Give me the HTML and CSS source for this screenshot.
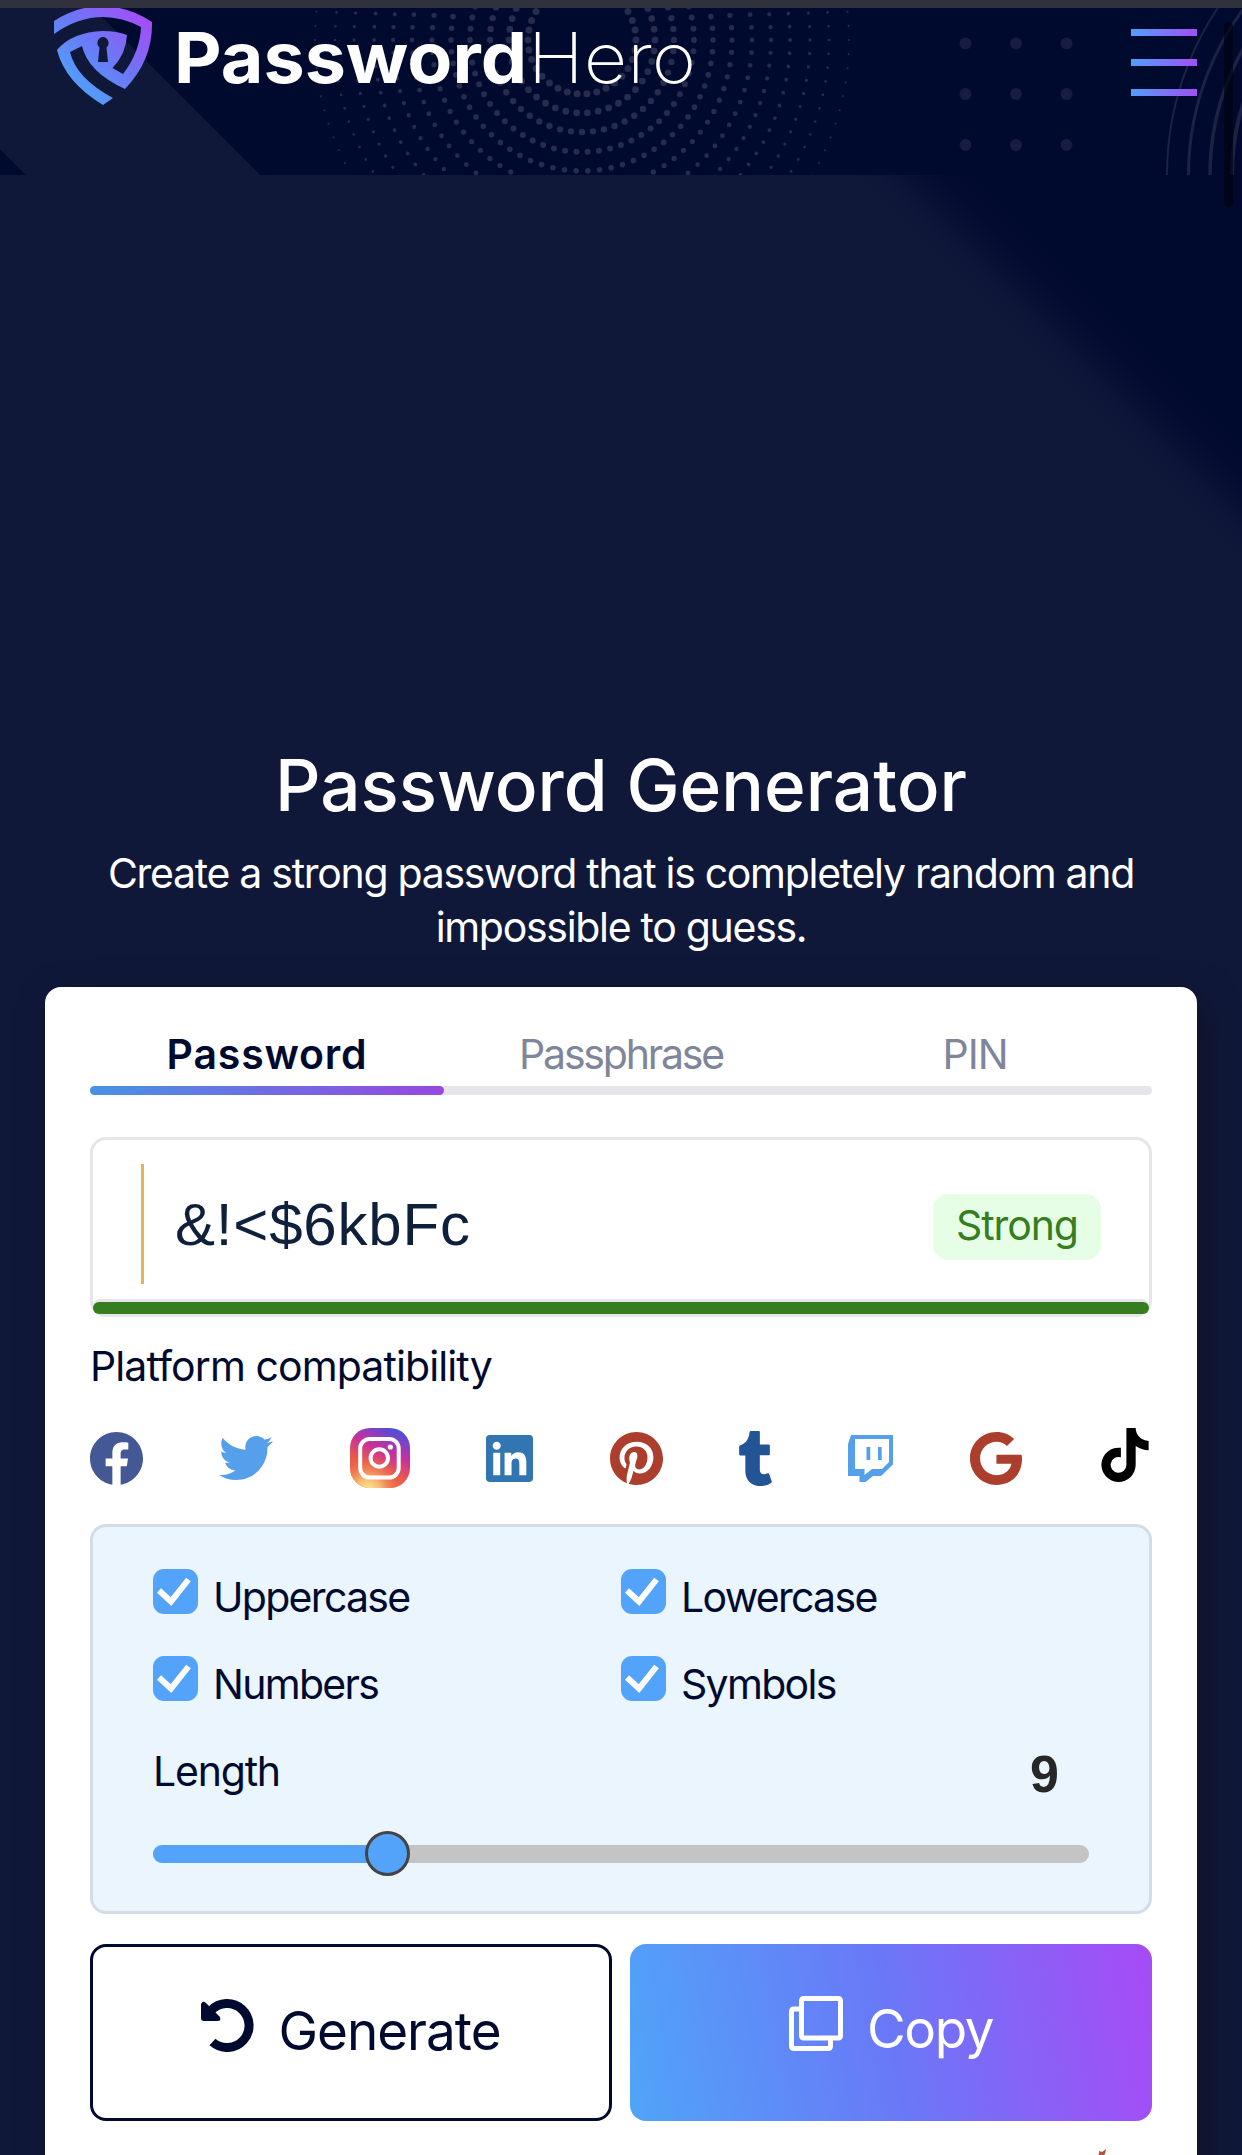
FILE: index.html
```html
<!DOCTYPE html>
<html lang="en">
<head>
<meta charset="utf-8">
<title>PasswordHero</title>
<link rel="stylesheet" href="styles.css">
</head>
<body>
<div class="status-strip"></div>
<header class="header">
  <svg class="header-art" width="1242" height="167" viewBox="0 8 1242 167">
    <path fill="#10183a" d="M0 8H93L260 175H26L0 149z"/>
    <g class="rings">
      <circle cx="582" cy="40" r="54" stroke-width="7" pathLength="34"/>
      <circle cx="582" cy="40" r="73" stroke-width="6.8" pathLength="42"/>
      <circle cx="582" cy="40" r="92" stroke-width="6.4" pathLength="52"/>
      <circle cx="582" cy="40" r="112" stroke-width="6" pathLength="62"/>
      <circle cx="582" cy="40" r="131" stroke-width="5.6" pathLength="70"/>
      <circle cx="582" cy="40" r="150" stroke-width="5.2" pathLength="76"/>
      <circle cx="582" cy="40" r="170" stroke-width="4.8" pathLength="84"/>
      <circle cx="582" cy="40" r="189" stroke-width="4.3" pathLength="92"/>
      <circle cx="582" cy="40" r="208" stroke-width="3.8" pathLength="98"/>
      <circle cx="582" cy="40" r="228" stroke-width="3.3" pathLength="106"/>
      <circle cx="582" cy="40" r="247" stroke-width="2.7" pathLength="112"/>
      <circle cx="582" cy="40" r="267" stroke-width="2.1" pathLength="118"/>
    </g>
    <g fill="#171c40">
      <circle cx="965.5" cy="43.5" r="6"/><circle cx="1016" cy="43.5" r="6"/><circle cx="1066.5" cy="43.5" r="6"/>
      <circle cx="965.5" cy="94" r="6"/><circle cx="1016" cy="94" r="6"/><circle cx="1066.5" cy="94" r="6"/>
      <circle cx="965.5" cy="145" r="6"/><circle cx="1016" cy="145" r="6"/><circle cx="1066.5" cy="145" r="6"/>
    </g>
    <g fill="none" stroke="#1b2344">
      <circle cx="1467" cy="175" r="300" stroke-width="2"/>
      <circle cx="1467" cy="175" r="278.5" stroke-width="3"/>
      <circle cx="1467" cy="175" r="257" stroke-width="3.5"/>
      <circle cx="1467" cy="175" r="235" stroke-width="4"/>
    </g>
  </svg>
  <svg class="logo" width="646" height="107" viewBox="54 8 646 107">
    <defs>
      <linearGradient id="shield" gradientUnits="userSpaceOnUse" x1="75" y1="95" x2="148" y2="20">
        <stop offset="0" stop-color="#4fa3f8"/><stop offset=".5" stop-color="#6c77f7"/><stop offset="1" stop-color="#a44df6"/>
      </linearGradient>
    </defs>
    <path fill="url(#shield)" d="M54 34V21Q77 6 103 6Q130 7 152 22Q153 60 125 89Q88 72 82 46L70 52Q76 78 113 98L103 105Q65 82 57 50Q72 32 103 31Q117 31 127 35Q126 54 112.500 68L123 74Q140 52 141 27Q122 17 103 17Q78 17 54 34z"/>
    <path fill="#10183a" d="M103 37a6 6 0 0 1 3.500 10.500L108 62H98L99.500 47.500A6 6 0 0 1 103 37z"/>
    <text class="logo-bold" x="174" y="83" textLength="353" lengthAdjust="spacingAndGlyphs">Password</text>
    <text class="logo-thin" x="528" y="83" textLength="168" lengthAdjust="spacingAndGlyphs">Hero</text>
  </svg>
  <div class="menu"><i></i><i></i><i></i></div>
</header>
<div class="scroll-thumb"></div>

<main class="hero">
  <svg class="hero-art" width="1242" height="500" viewBox="0 175 1242 500">
    <defs>
      <linearGradient id="sky" gradientUnits="userSpaceOnUse" x1="1048" y1="377" x2="1112" y2="313">
        <stop offset="0" stop-color="#000a2e" stop-opacity="0"/>
        <stop offset=".25" stop-color="#000a2e" stop-opacity=".15"/>
        <stop offset=".75" stop-color="#000a2e" stop-opacity=".85"/>
        <stop offset="1" stop-color="#000a2e"/>
      </linearGradient>
    </defs>
    <rect y="175" width="1242" height="500" fill="url(#sky)"/>
  </svg>
  <h1>Password Generator</h1>
  <p class="lead"><span>Create a strong password that is completely random and</span><br>impossible to guess.</p>

  <section class="card">
    <nav class="tabs">
      <a class="tab active">Password</a><a class="tab tab-wide">Passphrase</a><a class="tab">PIN</a>
    </nav>
    <div class="tab-track"><div class="tab-fill"></div></div>

    <div class="output">
      <div class="output-row">
        <div class="caret"></div>
        <div class="password">&amp;!&lt;$6kbFc</div>
        <div class="badge">Strong</div>
      </div>
      <div class="strength"><div class="strength-fill"></div></div>
    </div>

    <h2>Platform compatibility</h2>
    <div class="platforms">
      <svg width="53" height="53" viewBox="8 8 496 496"><path fill="#435894" d="M504 256C504 119 393 8 256 8S8 119 8 256c0 123.780 90.690 226.380 209.250 245V327.690h-63V256h63v-54.640c0-62.150 37-96.480 93.670-96.480 27.140 0 55.520 4.840 55.520 4.840v61h-31.280c-30.800 0-40.410 19.120-40.410 38.730V256h68.780l-11 71.690h-57.780V501C413.310 482.380 504 379.780 504 256z"/></svg>
      <svg width="54" height="54" viewBox="0 0 512 512"><path fill="#569feb" d="M459.370 151.716c.325 4.548.325 9.097.325 13.645 0 138.720-105.583 298.558-298.558 298.558-59.452 0-114.680-17.219-161.137-47.106 8.447.974 16.568 1.299 25.340 1.299 49.055 0 94.213-16.568 130.274-44.832-46.132-.975-84.792-31.188-98.112-72.772 6.498.974 12.995 1.624 19.818 1.624 9.421 0 18.843-1.300 27.614-3.573-48.081-9.747-84.143-51.980-84.143-102.985v-1.299c13.969 7.797 30.214 12.670 47.431 13.319-28.264-18.843-46.781-51.005-46.781-87.391 0-19.492 5.197-37.360 14.294-52.954 51.655 63.675 129.300 105.258 216.365 109.807-1.624-7.797-2.599-15.918-2.599-24.040 0-57.828 46.782-104.934 104.934-104.934 30.213 0 57.502 12.670 76.670 33.137 23.715-4.548 46.456-13.320 66.599-25.340-7.798 24.366-24.366 44.833-46.132 57.827 21.117-2.273 41.584-8.122 60.426-16.243-14.292 20.791-32.161 39.308-52.628 54.253z"/></svg>
      <svg width="60" height="60" viewBox="0 0 60 60">
        <defs>
          <linearGradient id="ig1" x1=".3" y1="1" x2=".75" y2="0">
            <stop offset="0" stop-color="#f0653f"/><stop offset=".35" stop-color="#e8594d"/><stop offset=".62" stop-color="#c8309c"/><stop offset=".8" stop-color="#8f3dbc"/><stop offset="1" stop-color="#3f53dd"/>
          </linearGradient>
          <radialGradient id="ig2" cx=".3" cy="1.050" r=".6">
            <stop offset="0" stop-color="#fdf39a"/><stop offset=".35" stop-color="#f9d07e" stop-opacity=".8"/><stop offset="1" stop-color="#f0653f" stop-opacity="0"/>
          </radialGradient>
        </defs>
        <rect width="60" height="60" rx="20" fill="url(#ig1)"/><rect width="60" height="60" rx="20" fill="url(#ig2)"/>
        <g fill="none" stroke="#fff" stroke-width="4"><rect x="10.200" y="11" width="38.500" height="38.500" rx="9.500"/><circle cx="29.300" cy="30" r="8.700"/></g><circle cx="40.300" cy="19" r="2.600" fill="#fff"/>
      </svg>
      <svg width="47" height="47" viewBox="0 32 448 448"><path fill="#3275b0" d="M416 32H31.900C14.300 32 0 46.500 0 64.300v383.400C0 465.500 14.300 480 31.900 480H416c17.600 0 32-14.500 32-32.300V64.300c0-17.800-14.400-32.300-32-32.300zM135.400 416H69V202.200h66.500V416zm-33.200-243c-21.300 0-38.500-17.300-38.500-38.500S80.900 96 102.200 96c21.200 0 38.500 17.300 38.500 38.500 0 21.300-17.200 38.500-38.500 38.500zm282.100 243h-66.400V312c0-24.800-.5-56.700-34.500-56.700-34.600 0-39.900 27-39.900 54.900V416h-66.400V202.200h63.700v29.200h.9c8.900-16.800 30.600-34.500 62.900-34.500 67.200 0 79.700 44.300 79.700 101.900V416z"/></svg>
      <svg width="53" height="53" viewBox="0 8 496 496"><path fill="#ab3e2c" d="M496 256c0 137-111 248-248 248-25.600 0-50.200-3.900-73.400-11.100 10.100-16.500 25.200-43.500 30.800-65 3-11.600 15.400-59 15.400-59 8.100 15.400 31.700 28.500 56.800 28.500 74.800 0 128.700-68.800 128.700-154.300 0-81.900-66.900-143.200-152.900-143.200-107 0-163.900 71.800-163.900 150.100 0 36.400 19.400 81.700 50.300 96.100 4.700 2.200 7.200 1.200 8.300-3.300.8-3.400 5-20.300 6.900-28.100.6-2.500.3-4.700-1.700-7.100-10.100-12.500-18.300-35.300-18.300-56.600 0-54.700 41.400-107.600 112-107.600 60.900 0 103.600 41.500 103.600 100.900 0 67.100-33.900 113.600-78 113.600-24.300 0-42.600-20.100-36.700-44.800 7-29.500 20.500-61.300 20.500-82.600 0-19-10.200-34.900-31.400-34.900-24.900 0-44.900 25.700-44.900 60.200 0 22 7.400 36.800 7.400 36.800s-24.500 103.800-29 123.200c-5 21.400-3 51.600-.9 71.200C65.400 450.900 0 361.100 0 256 0 119 111 8 248 8s248 111 248 248z"/></svg>
      <svg width="33" height="55" viewBox="7 0 306 512"><path fill="#235495" d="M309.800 480.300c-13.600 14.500-50 31.700-97.400 31.700-120.800 0-147-88.800-147-140.600v-144H17.900c-5.500 0-10-4.500-10-10v-68c0-7.200 4.500-13.600 11.300-16 62-21.800 81.500-76 84.300-117.100.8-11 6.500-16.300 16.100-16.300h70.900c5.500 0 10 4.500 10 10v115.200h83c5.500 0 10 4.400 10 9.900v81.700c0 5.500-4.500 10-10 10h-83.400V360c0 34.200 23.700 53.600 68 35.800 4.800-1.900 9-3.200 12.700-2.200 3.500.9 5.800 3.400 7.400 7.900l22 64.300c1.800 5 3.300 10.600-.4 14.500z"/></svg>
      <svg width="45" height="47" viewBox="0 0 45 47"><path fill="#569feb" fill-rule="evenodd" d="M3 0H45V29.500L33 41H25L17.500 47H11.500V41H0V9zM7 4V34H16.500V40L24 34H34L41 27V4zM18.500 12H22.200V25H18.500zM30 12H33.700V25H30z"/></svg>
      <svg width="52" height="53" viewBox="0 8 488 496"><path fill="#ab3e2c" d="M488 261.800C488 403.300 391.100 504 248 504 110.800 504 0 393.200 0 256S110.800 8 248 8c66.800 0 123 24.500 166.300 64.900l-67.500 64.900C258.500 52.600 94.300 116.600 94.300 256c0 86.500 69.100 156.600 153.700 156.600 98.200 0 135-70.400 140.800-106.900H248v-85.300h236.100c2.300 12.700 3.900 24.900 3.900 41.400z"/></svg>
      <svg class="tiktok" width="48" height="54" viewBox="0 0 448 512"><path d="M448 209.910a210.060 210.060 0 0 1-122.770-39.250V349.380A162.550 162.550 0 1 1 185 188.310V278.200a74.620 74.620 0 1 0 52.230 71.180V0h88a121.180 121.180 0 0 0 1.860 22.170A122.180 122.180 0 0 0 381 102.390a121.430 121.430 0 0 0 67 20.140z"/></svg>
    </div>

    <div class="options">
      <div class="checks">
        <div class="check"><svg class="box" width="45" height="45" viewBox="0 0 45 45"><rect width="45" height="45" rx="11"/><path d="M6 21.500L18 32.500L35.500 10.500"/></svg><span>Uppercase</span></div>
        <div class="check"><svg class="box" width="45" height="45" viewBox="0 0 45 45"><rect width="45" height="45" rx="11"/><path d="M6 21.500L18 32.500L35.500 10.500"/></svg><span>Lowercase</span></div>
        <div class="check"><svg class="box" width="45" height="45" viewBox="0 0 45 45"><rect width="45" height="45" rx="11"/><path d="M6 21.500L18 32.500L35.500 10.500"/></svg><span>Numbers</span></div>
        <div class="check"><svg class="box" width="45" height="45" viewBox="0 0 45 45"><rect width="45" height="45" rx="11"/><path d="M6 21.500L18 32.500L35.500 10.500"/></svg><span>Symbols</span></div>
      </div>
      <div class="length-row"><span>Length</span><b>9</b></div>
      <div class="slider"><div class="slider-fill"></div><div class="knob"></div></div>
    </div>

    <div class="buttons">
      <button class="btn generate">
        <svg width="53" height="53" viewBox="0 0 53 53"><path fill="none" stroke="#000a2e" stroke-width="9" d="M10 11.500A22 22 0 1 1 11.500 43"/><path fill="#000a2e" d="M0 5Q2 1 5 4L18.500 17.500Q21 22 16.500 22H3Q0 22 0 19z"/></svg>
        <span>Generate</span>
      </button>
      <button class="btn copy">
        <svg width="54" height="55" viewBox="0 0 54 55"><g fill="none" stroke="#fff" stroke-width="5"><rect x="12.500" y="2.500" width="39" height="39.500" rx="2"/><path d="M11 13H5Q2.500 13 2.500 15.500V50Q2.500 52.500 5 52.500H39Q41.500 52.500 41.500 50V43"/></g></svg>
        <span>Copy</span>
      </button>
    </div>
    <svg class="leaf" width="11" height="8" viewBox="0 0 11 8"><path fill="#b5523a" d="M0 8L3 5L3 2L6 3L10 0L9 5L6 8z"/></svg>
  </section>
</main>
</body>
</html>
```
FILE: styles.css
```css
* { box-sizing: border-box; }
body { margin: 0; width: 1242px; height: 2155px; overflow: hidden; position: relative; background: #10183a; font-family: Inter, "Liberation Sans", sans-serif; color: #000a2e; }
svg { display: block; flex: none; }
.status-strip { height: 8px; background: #30313d; }

.header { position: relative; height: 167px; background: #000a2e; display: flex; justify-content: space-between; align-items: flex-start; padding: 0 45px 0 54px; overflow: hidden; }
.header-art { position: absolute; left: 0; top: 0; }
.rings circle { fill: none; stroke: #252c4d; stroke-linecap: round; stroke-dasharray: 0 1; }
.logo { position: relative; }
.logo text { font-size: 70px; fill: #fff; }
.logo-bold { font-weight: 650; }
.logo-thin { font-weight: 200; }
.menu { position: relative; display: flex; flex-direction: column; gap: 23.5px; padding-top: 21px; }
.menu i { width: 66px; height: 6.5px; background: linear-gradient(90deg, #529ffa, #a04ff6); }
.scroll-thumb { position: absolute; left: 1224px; top: 22px; width: 9px; height: 185px; border-radius: 5px; background: rgba(0, 2, 14, .65); z-index: 1; }

.hero { position: relative; height: 1980px; padding: 565px 45px 0; }
.hero-art { position: absolute; left: 0; top: 0; }
h1 { position: relative; margin: 0; font-size: 71px; line-height: 90px; font-weight: 500; letter-spacing: 0; color: #fff; text-align: center; white-space: nowrap; }
.lead { margin: 16px 0 0; font-size: 41px; line-height: 54px; letter-spacing: -1.3px; color: #fff; text-align: center; white-space: nowrap; }

.card { height: 1200px; margin-top: 33px; padding: 45px 45px 0; border-radius: 16px; background: #fff; box-shadow: 8px 10px 32px rgba(12, 14, 22, .55); }
.tabs { display: grid; grid-template-columns: 1fr 1fr 1fr; height: 54px; }
.tab { font-size: 41px; line-height: 44px; text-align: center; color: #80869a; letter-spacing: -1px; }
.tab-wide { letter-spacing: -2.2px; }
.tab.active { color: #000a2e; font-weight: 570; letter-spacing: .8px; }
.tab-track { height: 9px; border-radius: 5px; background: #e5e5ea; }
.tab-fill { width: 354px; height: 9px; border-radius: 5px; background: linear-gradient(90deg, #4893e3, #9747df); }

.output { height: 180px; margin-top: 42px; border: 3px solid #e5e5ea; border-radius: 16px; }
.output-row { height: 159px; display: flex; align-items: center; padding: 14px 48px 0; }
.caret { width: 3px; height: 120px; background: #dbb85b; margin-top: -6px; }
.password { flex: 1; padding-left: 31px; margin-top: -4px; font-family: "Liberation Sans", sans-serif; font-size: 60px; letter-spacing: .8px; color: #0f203c; white-space: nowrap; }
.badge { width: 168px; height: 66px; border-radius: 15px; background: #e6fee6; color: #367d20; font-size: 41px; line-height: 62px; letter-spacing: -1.1px; text-align: center; }
.strength { height: 15px; border-top: 3px solid #e5e5ea; border-radius: 8px; background: #e5e5ea; }
.strength-fill { height: 12px; border-radius: 6px; background: #367d20; }

h2 { margin: 24px 0 0; font-size: 41px; line-height: 50px; font-weight: 400; letter-spacing: -.9px; }
.platforms { display: flex; justify-content: space-between; align-items: center; height: 60px; margin-top: 37px; padding: 0 3px 0 0; }
.tiktok { margin: 0 0 6px 3px; }

.options { height: 390px; margin-top: 36px; padding: 42px 60px; border: 3px solid #d2dde8; border-radius: 16px; background: #eaf5fe; }
.checks { display: grid; grid-template-columns: 1fr 1fr; grid-auto-rows: 87px; }
.check { display: flex; gap: 15px; font-size: 41px; line-height: 56px; letter-spacing: -1.7px; }
.box rect { fill: #52a3f9; }
.box path { fill: none; stroke: #fff; stroke-width: 6; }
.length-row { height: 102px; display: flex; justify-content: space-between; font-size: 41px; line-height: 56px; letter-spacing: -1.2px; padding-right: 30px; }
.length-row b { font-family: "Liberation Sans", sans-serif; font-size: 52px; line-height: 63px; letter-spacing: 0; color: #272727; }
.slider { position: relative; height: 18px; border-radius: 9px; background: #c4c4c4; }
.slider-fill { width: 235px; height: 18px; border-radius: 9px 0 0 9px; background: #52a3f9; }
.knob { position: absolute; left: 212px; top: -14px; width: 45px; height: 45px; border: 3px solid #444; border-radius: 50%; background: #52a3f9; }

.buttons { display: grid; grid-template-columns: 1fr 1fr; gap: 18px; margin-top: 30px; }
.btn { height: 177px; display: flex; justify-content: center; align-items: center; border: 3px solid #000a2e; border-radius: 16px; background: #fff; color: #000a2e; font: 400 53px Inter, sans-serif; letter-spacing: -1px; padding: 0; gap: 24px; }
.generate svg { margin-bottom: 14px; }
.generate span { margin-bottom: 3px; }
.copy { border: 0; background: linear-gradient(80deg, #50a4f8, #6a78f7 50%, #a44df6 97%); color: #fff; }
.copy svg { margin-bottom: 18px; }
.copy span { margin-bottom: 8px; letter-spacing: -1.4px; }
.leaf { margin: 28px 0 0 1006px; }
```
